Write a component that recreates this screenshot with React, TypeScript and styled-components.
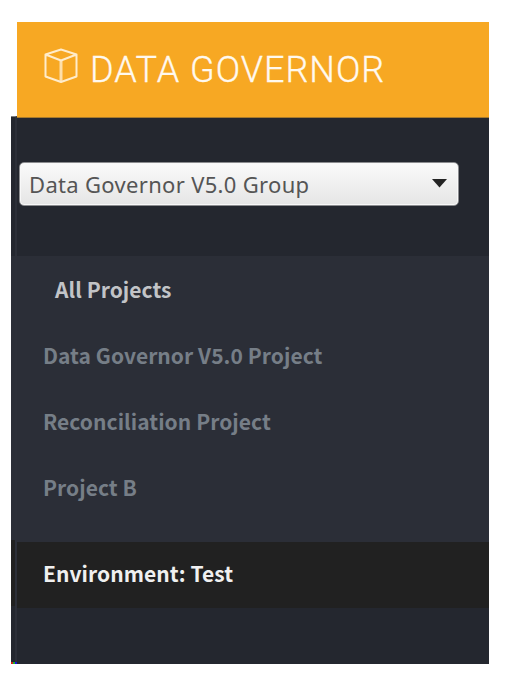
import React from "react";
import styled, { createGlobalStyle } from "styled-components";

const GlobalStyle = createGlobalStyle`
  * { box-sizing: border-box; }
  body { margin: 0; background: #fff; }
`;

const Page = styled.div`
  display: grid;
  grid-template-columns: 6px 472px;
  width: 508px;
  height: 679px;
  padding: 22px 19px 15px 11px;
  overflow: hidden;
`;

const Rail = styled.div`
  display: flex;
  flex-direction: column;
  margin-top: 94px;
  background: #24272f;
  border-top: 1px solid #7b7d80;
  border-right: 2px solid #2c2f38;
`;

const RailSection = styled.div<{ $height: number; $color: string }>`
  flex: 0 0 ${(p) => p.$height}px;
  background: ${(p) => p.$color};
`;

const RailFoot = styled.div`
  margin-top: auto;
  margin-right: -2px;
  height: 2px;
  background: linear-gradient(90deg, #d02118 0 2px, #18b52a 2px 4px, #1414d8 4px 6px);
`;

const Sidebar = styled.nav`
  display: flex;
  flex-direction: column;
  background: #24272f;
`;

const Brand = styled.header`
  display: flex;
  flex: 0 0 96px;
  align-items: center;
  padding-left: 27px;
  background: #f7a823;
  border-bottom: 1px solid #a77a2d;
`;

const BrandIcon = styled.svg`
  flex: none;
  width: 34px;
  height: 36px;
  margin-top: -7px;
`;

const BrandName = styled.span`
  margin-left: 12px;
  font: 300 36px/40px Roboto, sans-serif;
  letter-spacing: 1.03px;
  white-space: nowrap;
  color: #fff9ef;
  -webkit-text-stroke: 0.3px #fff9ef;
`;

const GroupArea = styled.div`
  flex: 0 0 138px;
  padding: 44px 0 0 2px;
`;

const GroupSelect = styled.button`
  display: flex;
  align-items: center;
  justify-content: space-between;
  width: 440px;
  height: 44px;
  padding: 0 11px 0 9px;
  border: 1px solid #8b8c8f;
  border-radius: 5px;
  background: linear-gradient(#fafafa, #e5e5e5);
  box-shadow: inset 0 0 0 1px #f8f8f8;
  color: #555;
  font: 400 22px/28px "Noto Sans", sans-serif;
  letter-spacing: 0.32px;
  white-space: nowrap;
`;

const Caret = styled.svg`
  width: 15px;
  height: 9px;
  margin-top: -1px;
`;

const Projects = styled.div`
  flex: 0 0 286px;
  background: #2b2e37;
`;

const NavItem = styled.div<{ $tone: string; $indent?: number }>`
  display: flex;
  align-items: center;
  height: 66px;
  padding-left: ${(p) => p.$indent ?? 26}px;
  color: ${(p) => p.$tone};
  font: 700 21px/30px "Noto Sans CJK SC", sans-serif;
  letter-spacing: 0.05px;
  white-space: nowrap;
`;

const Environment = styled(NavItem)`
  flex: none;
  padding-bottom: 4px;
  background: #212121;
`;

export default function App() {
  return (
    <>
      <GlobalStyle />
      <Page>
        <Rail>
          <RailSection $height={139} $color="#24272f" />
          <RailSection $height={284} $color="#2b2e37" />
          <RailSection $height={66} $color="#212121" />
          <RailFoot />
        </Rail>
        <Sidebar>
          <Brand>
            <BrandIcon viewBox="0 0 34 36" fill="none" stroke="#ffeccb" strokeWidth="2" strokeLinejoin="round">
              <path d="M17 1.5 32.5 6.5V28.5L17 34 1.5 28.5V6.5ZM1.5 6.5 17 12.5 32.5 6.5" />
              <path d="M17 12.5V34" strokeWidth="3" strokeOpacity=".8" />
            </BrandIcon>
            <BrandName>DATA GOVERNOR</BrandName>
          </Brand>
          <GroupArea>
            <GroupSelect type="button">
              <span>Data Governor V5.0 Group</span>
              <Caret viewBox="0 0 15 9"><path d="M0 0H15L7.5 8.5Z" fill="#242424" /></Caret>
            </GroupSelect>
          </GroupArea>
          <Projects>
            <NavItem $tone="#c2c4c7" $indent={38}>All Projects</NavItem>
            <NavItem $tone="#767e87">Data Governor V5.0 Project</NavItem>
            <NavItem $tone="#767e87">Reconciliation Project</NavItem>
            <NavItem $tone="#767e87">Project B</NavItem>
          </Projects>
          <Environment $tone="#f0f0f0">Environment: Test</Environment>
        </Sidebar>
      </Page>
    </>
  );
}
